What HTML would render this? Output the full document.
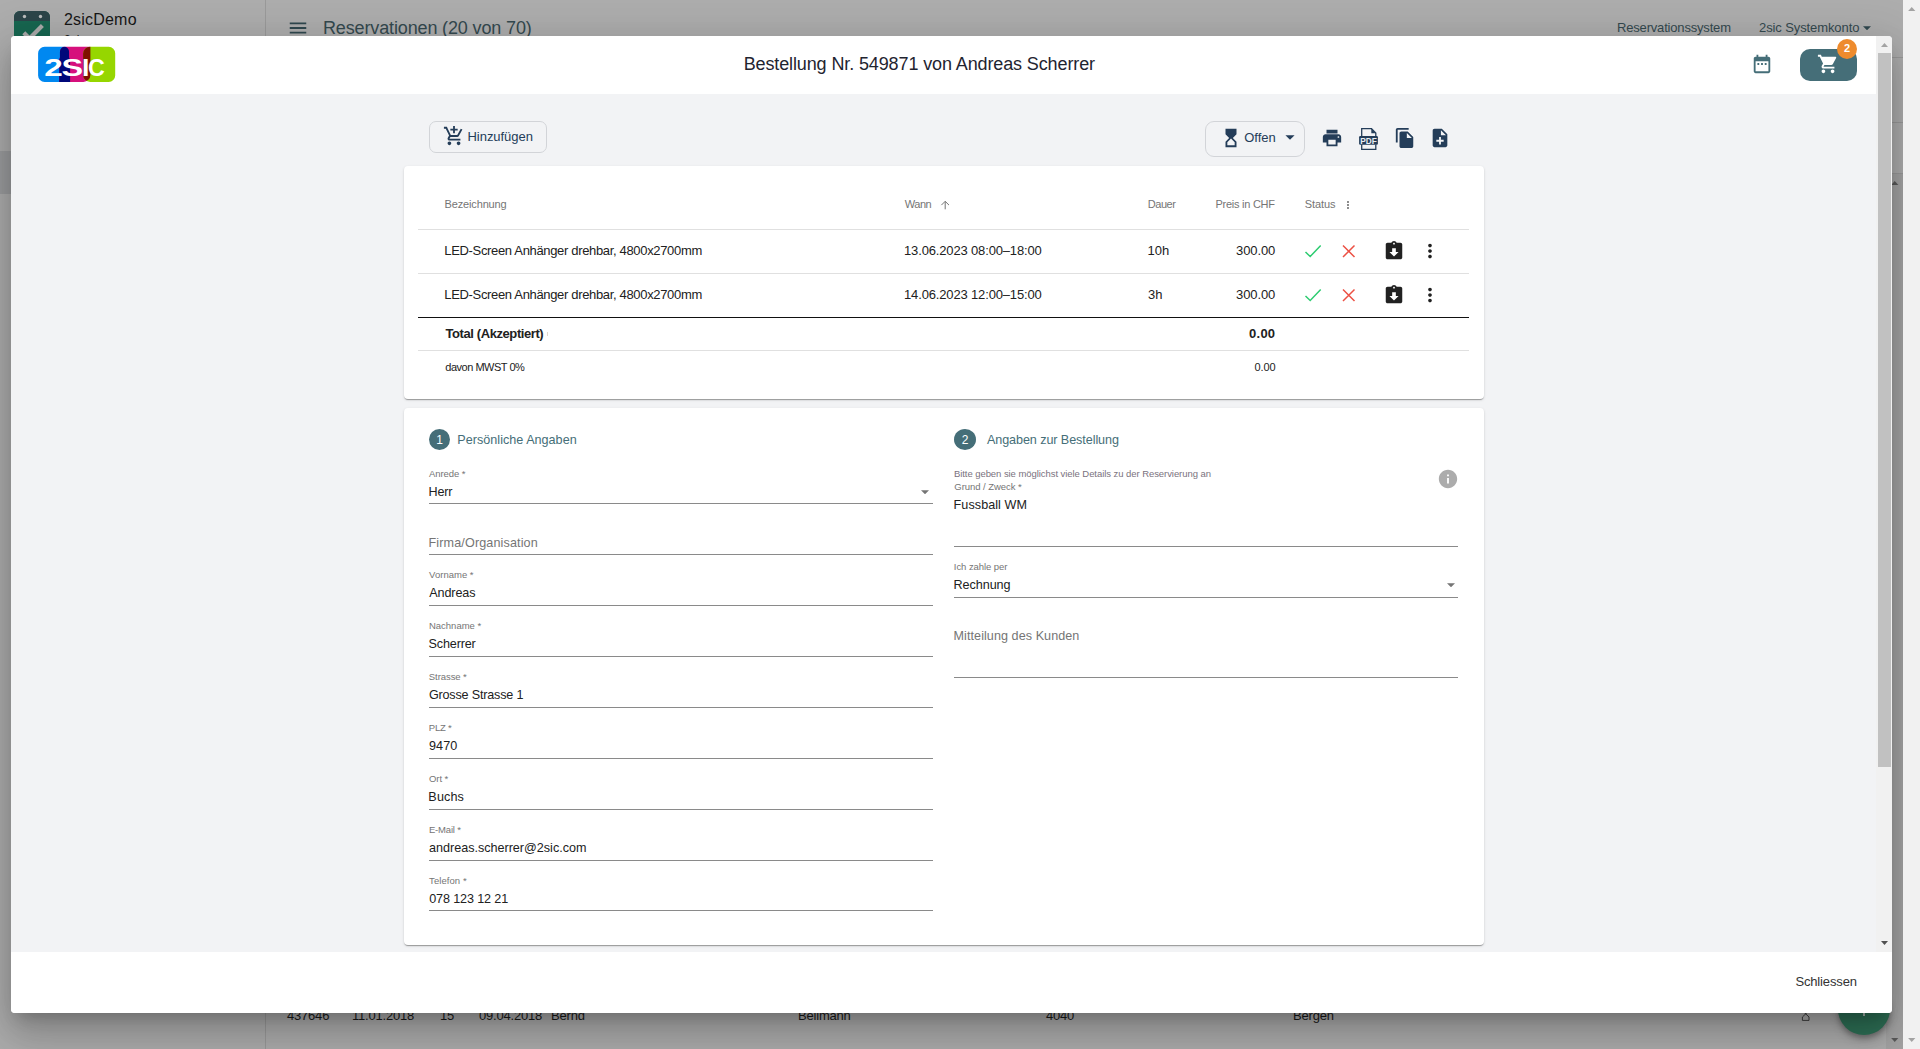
<!DOCTYPE html>
<html lang="de">
<head>
<meta charset="utf-8">
<title>Bestellung Nr. 549871 von Andreas Scherrer</title>
<style>
*{box-sizing:border-box;margin:0;padding:0}
html,body{width:1920px;height:1049px;overflow:hidden}
body{position:relative;background:#adadad;font-family:"Liberation Sans",Arial,sans-serif;color:#212121;font-size:13px}
.a{position:absolute}
.t{position:absolute;white-space:nowrap;line-height:1}
svg{display:block}
/* ---------- underlying (dimmed) page ---------- */
#bg{position:absolute;left:0;top:0;width:1920px;height:1049px;overflow:hidden}
/* ---------- dialog ---------- */
#dlg{position:absolute;left:11px;top:36px;width:1881px;height:977px;background:#f2f3f5;border-radius:4px;overflow:hidden}
#shadow{position:absolute;left:11px;top:36px;width:1881px;height:977px;border-radius:4px;box-shadow:0 11px 15px -7px rgba(0,0,0,.2),0 24px 38px 3px rgba(0,0,0,.14),0 9px 46px 8px rgba(0,0,0,.12)}
#hdr{position:absolute;left:0;top:0;width:1866px;height:58px;background:#fff}
#ftr{position:absolute;left:0;top:916px;width:1881px;height:61px;background:#fff}
.card{position:absolute;background:#fff;border-radius:4px;box-shadow:0 2px 1px -1px rgba(0,0,0,.2),0 1px 1px 0 rgba(0,0,0,.14),0 1px 3px 0 rgba(0,0,0,.12)}
.hl{position:absolute;height:1px;background:#e0e0e0}
.ul{position:absolute;height:1px;background:#8a8a8a;width:504px}
.lb{color:#757575;font-size:9.500px}
.val{font-size:12.600px;color:#212121}
.ph{font-size:12.600px;color:#757575}
.th{font-size:11px;color:#757575}
.td{font-size:13px;color:#212121}
.btn{position:absolute;border:1px solid #d2d4d8;border-radius:7px;background:#f2f3f5}
</style>
</head>
<body>
<div id="bg">
  <!-- sidebar -->
  <div class="a" style="left:0;top:0;width:265px;height:1049px;background:#adadad"></div>
  <div class="a" style="left:0;top:151px;width:265px;height:43px;background:#9b9c9e"></div>
  <div class="a" style="left:265px;top:0;width:1px;height:1049px;background:#9a9a9a"></div>
  <svg class="a" style="left:14px;top:11px" width="36" height="36" viewBox="0 0 36 36">
    <rect x="0" y="0" width="36" height="36" rx="6" fill="#176650"/>
    <path d="M0 6a6 6 0 0 1 6-6h24a6 6 0 0 1 6 6v4H0z" fill="#2b4549"/>
    <circle cx="10.5" cy="5.5" r="1.7" fill="#b9bcbc"/><circle cx="26.500" cy="5.500" r="1.700" fill="#b9bcbc"/>
    <path d="M9.800 21.800l5.700 5.700L28.400 14.600" fill="none" stroke="#aaa" stroke-width="4.200"/>
  </svg>
  <span class="t" style="left:64px;top:12px;font-size:16px;color:#161616;letter-spacing:.2px">2sicDemo</span>
  <span class="t" style="left:64px;top:33.900px;font-size:12px;color:#222">2sic</span>
  <!-- top bar -->
  <svg class="a" style="left:287.250px;top:16.700px" width="22" height="22" viewBox="0 0 24 24"><path fill="#30484f" d="M3 18h18v-2H3v2zm0-5h18v-2H3v2zm0-7v2h18V6H3z"/></svg>
  <span class="t" style="left:323px;top:19px;font-size:18px;color:#34494f;letter-spacing:-.14px">Reservationen (20 von 70)</span>
  <span class="t" style="left:1617px;top:21px;font-size:13px;color:#34494f;letter-spacing:-.18px">Reservationssystem</span>
  <span class="t" style="left:1759px;top:21px;font-size:13px;color:#34494f;letter-spacing:-.1px">2sic Systemkonto</span>
  <svg class="a" style="left:1863px;top:25.5px" width="8" height="4.500" viewBox="0 0 10 5"><path fill="#30484f" d="M0 0h10L5 5z"/></svg>
  <div class="a" style="left:266px;top:57px;width:1637px;height:1px;background:#9a9a9a"></div>
  <div class="a" style="left:266px;top:122px;width:1637px;height:1px;background:#9a9a9a"></div>
  <div class="a" style="left:266px;top:173px;width:1637px;height:1px;background:#9a9a9a"></div>
  <!-- inner scrollbar of the list -->
  <div class="a" style="left:1886px;top:174px;width:17px;height:875px;background:#a4a4a4"></div>
  <svg class="a" style="left:1891px;top:181px" width="7.500" height="4" viewBox="0 0 9 5"><path fill="#5a5a5a" d="M0 5h9L4.500 0z"/></svg>
  <svg class="a" style="left:1891px;top:1038px" width="7.500" height="4" viewBox="0 0 9 5"><path fill="#5a5a5a" d="M0 0h9L4.500 5z"/></svg>
  <!-- last visible table row -->
  <span class="t" style="left:287px;top:1009px;font-size:13px;color:#1a1a1a;letter-spacing:-.2px">437646</span>
  <span class="t" style="left:352px;top:1009px;font-size:13px;color:#1a1a1a;letter-spacing:-.2px">11.01.2018</span>
  <span class="t" style="left:440px;top:1009px;font-size:13px;color:#1a1a1a;letter-spacing:-.2px">15</span>
  <span class="t" style="left:479px;top:1009px;font-size:13px;color:#1a1a1a;letter-spacing:-.2px">09.04.2018</span>
  <span class="t" style="left:551px;top:1009px;font-size:13px;color:#1a1a1a;letter-spacing:-.2px">Bernd</span>
  <span class="t" style="left:798px;top:1009px;font-size:13px;color:#1a1a1a;letter-spacing:-.2px">Bellmann</span>
  <span class="t" style="left:1046px;top:1009px;font-size:13px;color:#1a1a1a;letter-spacing:-.2px">4040</span>
  <span class="t" style="left:1293px;top:1009px;font-size:13px;color:#1a1a1a;letter-spacing:-.2px">Bergen</span>
  <svg class="a" style="left:1799px;top:1008px" width="14" height="14" viewBox="0 0 14 14"><path fill="none" stroke="#333" stroke-width=".900" d="M4.600 3.800l5.400 5.200v3.400H3.400V9l5.400-5.200"/></svg>
  <!-- FAB -->
  <div class="a" style="left:1837.5px;top:983px;width:52px;height:52px;border-radius:50%;background:#2e7056;box-shadow:0 3px 5px rgba(0,0,0,.25),0 6px 10px rgba(0,0,0,.15)"></div>
  <div class="a" style="left:1862.5px;top:1002px;width:2px;height:14px;background:#a9b4af"></div>
  <div class="a" style="left:1856.5px;top:1008px;width:14px;height:2px;background:#a9b4af"></div>
</div>
<div id="shadow"></div>
<div id="dlg">
<div id="in" class="a" style="left:-11px;top:-36px;width:1920px;height:1049px">
  <!-- header -->
  <div class="a" style="left:11px;top:36px;width:1865px;height:58px;background:#fff"></div>
  <svg class="a" style="left:36px;top:44px" width="82" height="41" viewBox="36 44 82 41">
    <defs><clipPath id="cb"><path d="M44.600 46.800H64.300A4.760 4.760 0 0 1 69.060 51.560V57C69.060 58.600 70.100 58.600 70.100 60.200V81.900H44.600A6.500 6.500 0 0 1 38.100 75.400V53.300A6.500 6.500 0 0 1 44.600 46.800Z"/></clipPath><clipPath id="cg"><path d="M90.1 46.8H108.7A6.5 6.5 0 0 1 115.2 53.3V75.4A6.5 6.5 0 0 1 108.7 81.9H90.1A7 7 0 0 1 83.1 74.9V53.8A7 7 0 0 1 90.1 46.8Z"/></clipPath></defs>
    <path d="M44.600 46.800H64.300A4.760 4.760 0 0 1 69.060 51.560V57C69.060 58.600 70.100 58.600 70.100 60.200V81.900H44.600A6.500 6.500 0 0 1 38.100 75.400V53.300A6.500 6.500 0 0 1 44.600 46.800Z" fill="#0088f0"/>
    <path d="M64.700 46.800H90.400V74.900A7 7 0 0 1 83.400 81.900H59.200V60.200C59.200 58.600 59.950 58.600 59.950 57V51.550A4.750 4.750 0 0 1 64.700 46.800Z" fill="#d6107c"/>
    <path d="M90.1 46.8H108.7A6.5 6.5 0 0 1 115.2 53.3V75.4A6.5 6.5 0 0 1 108.7 81.9H90.1A7 7 0 0 1 83.1 74.9V53.8A7 7 0 0 1 90.1 46.8Z" fill="#96d600"/>
    <path d="M64.700 46.800H90.400V74.900A7 7 0 0 1 83.400 81.900H59.200V60.200C59.200 58.600 59.950 58.600 59.950 57V51.550A4.750 4.750 0 0 1 64.700 46.800Z" fill="#00087a" clip-path="url(#cb)"/>
    <path d="M64.700 46.800H90.400V74.900A7 7 0 0 1 83.400 81.900H59.200V60.200C59.200 58.600 59.950 58.600 59.950 57V51.550A4.750 4.750 0 0 1 64.700 46.800Z" fill="#7f1000" clip-path="url(#cg)"/>
    <g font-family="Liberation Sans, Arial, sans-serif" font-weight="bold" font-size="23.700" fill="#fff"><text x="44.300" y="76" textLength="18.600" lengthAdjust="spacingAndGlyphs">2</text><text x="61.600" y="76" textLength="21.600" lengthAdjust="spacingAndGlyphs">S</text><text x="81.900" y="76" textLength="7.400" lengthAdjust="spacingAndGlyphs">I</text><text x="88" y="76" textLength="16.800" lengthAdjust="spacingAndGlyphs">C</text></g>
  </svg>
  <span class="t" id="title" style="left:743.64px;top:55.00px;font-size:18px;color:#1f2430;letter-spacing:-0.117px">Bestellung Nr. 549871 von Andreas Scherrer</span>
  <svg class="a" style="left:1751px;top:53px" width="22" height="22" viewBox="0 0 24 24"><path fill="#456e78" d="M9 11H7v2h2v-2zm4 0h-2v2h2v-2zm4 0h-2v2h2v-2zm2-7h-1V2h-2v2H8V2H6v2H5c-1.110 0-1.990.900-1.990 2L3 20c0 1.100.890 2 2 2h14c1.100 0 2-.900 2-2V6c0-1.100-.900-2-2-2zm0 16H5V9h14v11z"/></svg>
  <div class="a" style="left:1800px;top:49px;width:57px;height:32px;border-radius:10px;background:#456e78"></div>
  <svg class="a" style="left:1817px;top:53px" width="22" height="22" viewBox="0 0 24 24"><path fill="#fff" d="M7 18c-1.100 0-1.990.900-1.990 2S5.900 22 7 22s2-.900 2-2-.900-2-2-2zM1 2v2h2l3.600 7.590-1.350 2.450c-.160.280-.250.610-.250.960 0 1.100.900 2 2 2h12v-2H7.420c-.140 0-.250-.110-.250-.250l.030-.120.900-1.630h7.450c.750 0 1.410-.410 1.750-1.030l3.580-6.490c.080-.140.120-.310.120-.480 0-.550-.450-1-1-1H5.210l-.940-2H1zm16 16c-1.100 0-1.990.900-1.990 2s.890 2 1.990 2 2-.900 2-2-.900-2-2-2z"/></svg>
  <div class="a" style="left:1837px;top:39px;width:20px;height:20px;border-radius:50%;background:#ee8b2d"></div>
  <span class="t" style="left:1837px;top:43px;width:20px;text-align:center;font-size:11px;font-weight:bold;color:#fff">2</span>
  <!--BODY-->
  <!-- toolbar -->
  <div class="btn" style="left:429px;top:121px;width:118px;height:32px"></div>
  <svg class="a" style="left:443px;top:125px" width="22" height="22" viewBox="0 0 24 24"><path fill="#243d59" d="M11 9h2V6h3V4h-3V1h-2v3H8v2h3v3zm-4 9c-1.100 0-1.990.900-1.990 2S5.900 22 7 22s2-.900 2-2-.900-2-2-2zm10 0c-1.100 0-1.990.900-1.990 2s.890 2 1.990 2 2-.900 2-2-.900-2-2-2zm-9.830-3.250l.030-.120.900-1.630h7.450c.750 0 1.410-.410 1.750-1.030l3.860-7.010L19.420 4h-.010l-1.100 2-2.760 5H8.530l-.130-.270L6.160 6l-.950-2-.940-2H1v2h2l3.600 7.590-1.350 2.450c-.160.280-.250.610-.250.960 0 1.100.900 2 2 2h12v-2H7.420c-.130 0-.250-.110-.250-.250z"/></svg>
  <span class="t" id="t_add" style="left:467.52px;top:130px;font-size:13px;color:#243d59;letter-spacing:-0.045px">Hinzufügen</span>
  <div class="btn" style="left:1205px;top:121px;width:100px;height:36px;border-radius:9px"></div>
  <svg class="a" style="left:1219.5px;top:127px" width="22" height="22" viewBox="0 0 24 24"><path fill="#243d59" d="M6 2l.010 6L10 12l-3.990 4.010L6 22h12v-6l-4-4 4-3.990V2H6zm10 14.500V20H8v-3.500l4-4 4 4z"/></svg>
  <span class="t" id="t_offen" style="left:1244.13px;top:131px;font-size:13px;color:#243d59;letter-spacing:0.012px">Offen</span>
  <svg class="a" style="left:1278.600px;top:126px" width="22" height="22" viewBox="0 0 24 24"><path fill="#243d59" d="M7 10l5 5 5-5z"/></svg>
  <svg class="a" style="left:1321.100px;top:127px" width="22" height="22" viewBox="0 0 24 24"><path fill="#243d59" d="M19 8H5c-1.660 0-3 1.340-3 3v6h4v4h12v-4h4v-6c0-1.660-1.340-3-3-3zm-3 11H8v-5h8v5zm3-7c-.550 0-1-.450-1-1s.450-1 1-1 1 .450 1 1-.450 1-1 1zm-1-9H6v4h12V3z"/></svg>
  <svg class="a" style="left:1357px;top:127px" width="24" height="24" viewBox="0 0 24 24">
    <path fill="none" stroke="#243d59" stroke-width="1.300" d="M4.700 9.500V1.700h9.800l4.300 4.300v3.500M4.700 17.500v4.800h14.100v-4.800"/>
    <path fill="#243d59" d="M14.300 1.700l4.500 4.500h-4.500z"/>
    <rect x="2.100" y="9.100" width="18.800" height="8.600" rx="1.200" fill="#243d59"/>
    <text x="11.500" y="16.700" text-anchor="middle" font-family="Liberation Sans, Arial, sans-serif" font-weight="bold" font-size="9" fill="#e9edf2" textLength="16.500" lengthAdjust="spacingAndGlyphs">PDF</text>
  </svg>
  <svg class="a" style="left:1393.900px;top:127px" width="22" height="22" viewBox="0 0 24 24"><path fill="#243d59" d="M16 1H4c-1.100 0-2 .900-2 2v14h2V3h12V1zm-1 4l6 6v10c0 1.100-.900 2-2 2H7.990C6.890 23 6 22.100 6 21l.010-14c0-1.100.890-2 1.990-2h7zm-1 7h5.500L14 6.500V12z"/></svg>
  <svg class="a" style="left:1429.100px;top:127px" width="22" height="22" viewBox="0 0 24 24"><path fill="#243d59" d="M14 2H6c-1.100 0-1.990.900-1.990 2L4 20c0 1.100.890 2 1.990 2H18c1.100 0 2-.900 2-2V8l-6-6zm2 14h-3v3h-2v-3H8v-2h3v-3h2v3h3v2zm-3-7V3.500L18.500 9H13z"/></svg>
  <!-- table card -->
  <div class="card" style="left:404px;top:166px;width:1080px;height:233px"></div>
  <span class="t th" id="h1" style="left:444.46px;top:199px;letter-spacing:-0.137px">Bezeichnung</span>
  <span class="t th" id="h2" style="left:904.85px;top:199px;letter-spacing:-0.486px">Wann</span>
  <svg class="a" style="left:939px;top:198.500px" width="12" height="12" viewBox="0 0 12 12"><path fill="none" stroke="#757575" stroke-width="1" d="M6.200 10.300V2.400M2.400 6.100l3.800-3.800 3.800 3.800"/></svg>
  <span class="t th" id="h3" style="left:1147.81px;top:199px;letter-spacing:-0.459px">Dauer</span>
  <span class="t th" id="h4" style="left:1215.46px;top:199px;letter-spacing:-0.252px">Preis in CHF</span>
  <span class="t th" id="h5" style="left:1304.64px;top:199px;letter-spacing:-0.067px">Status</span>
  <svg class="a" style="left:1341.500px;top:198.500px" width="12" height="12" viewBox="0 0 24 24"><path fill="#757575" d="M12 8c1.100 0 2-.900 2-2s-.900-2-2-2-2 .900-2 2 .900 2 2 2zm0 2c-1.100 0-2 .900-2 2s.900 2 2 2 2-.900 2-2-.900-2-2-2zm0 6c-1.100 0-2 .900-2 2s.900 2 2 2 2-.900 2-2-.900-2-2-2z"/></svg>
  <div class="hl" style="left:418px;top:229px;width:1051px"></div>
  <span class="t td" id="r1a" style="left:444.32px;top:244px;letter-spacing:-0.336px">LED-Screen Anhänger drehbar, 4800x2700mm</span>
  <span class="t td" id="r1b" style="left:904.05px;top:244px;letter-spacing:-0.154px">13.06.2023 08:00–18:00</span>
  <span class="t td" id="r1c" style="left:1147.60px;top:244px;letter-spacing:0.034px">10h</span>
  <span class="t td" id="r1d" style="left:1175.27px;width:100px;text-align:right;top:244px;letter-spacing:-0.088px">300.00</span>
  <svg class="a" style="left:1302px;top:240px" width="22" height="22" viewBox="0 0 22 22"><path fill="none" stroke="#2ecc71" stroke-width="1.500" d="M3.500 12l4.700 4.500L18.700 5.500"/></svg>
  <svg class="a" style="left:1338px;top:240px" width="22" height="22" viewBox="0 0 22 22"><path fill="none" stroke="#ec5145" stroke-width="1.500" d="M5 5.500l11.500 11.500M16.500 5.500L5 17"/></svg>
  <svg class="a" style="left:1382.750px;top:240.2px" width="22" height="22" viewBox="0 0 24 24"><path fill="#212121" d="M19 3h-4.180C14.400 1.840 13.300 1 12 1c-1.300 0-2.400.840-2.820 2H5c-1.100 0-2 .900-2 2v14c0 1.100.900 2 2 2h14c1.100 0 2-.900 2-2V5c0-1.100-.900-2-2-2zm-7 0c.550 0 1 .450 1 1s-.450 1-1 1-1-.450-1-1 .450-1 1-1zm0 15l-5-5h3V9h4v4h3l-5 5z"/></svg>
  <svg class="a" style="left:1418.900px;top:240.1px" width="22" height="22" viewBox="0 0 24 24"><path fill="#212121" d="M12 8c1.100 0 2-.900 2-2s-.900-2-2-2-2 .900-2 2 .900 2 2 2zm0 2c-1.100 0-2 .900-2 2s.900 2 2 2 2-.900 2-2-.900-2-2-2zm0 6c-1.100 0-2 .900-2 2s.900 2 2 2 2-.900 2-2-.900-2-2-2z"/></svg>
  <div class="hl" style="left:418px;top:273px;width:1051px"></div>
  <span class="t td" id="r2a" style="left:444.32px;top:288px;letter-spacing:-0.336px">LED-Screen Anhänger drehbar, 4800x2700mm</span>
  <span class="t td" id="r2b" style="left:904.05px;top:288px;letter-spacing:-0.154px">14.06.2023 12:00–15:00</span>
  <span class="t td" id="r2c" style="left:1148.04px;top:288px;letter-spacing:-0.057px">3h</span>
  <span class="t td" id="r2d" style="left:1175.27px;width:100px;text-align:right;top:288px;letter-spacing:-0.088px">300.00</span>
  <svg class="a" style="left:1302px;top:284px" width="22" height="22" viewBox="0 0 22 22"><path fill="none" stroke="#2ecc71" stroke-width="1.500" d="M3.500 12l4.700 4.500L18.700 5.500"/></svg>
  <svg class="a" style="left:1338px;top:284px" width="22" height="22" viewBox="0 0 22 22"><path fill="none" stroke="#ec5145" stroke-width="1.500" d="M5 5.500l11.500 11.500M16.500 5.500L5 17"/></svg>
  <svg class="a" style="left:1382.750px;top:284.2px" width="22" height="22" viewBox="0 0 24 24"><path fill="#212121" d="M19 3h-4.180C14.400 1.840 13.300 1 12 1c-1.300 0-2.400.840-2.820 2H5c-1.100 0-2 .900-2 2v14c0 1.100.900 2 2 2h14c1.100 0 2-.900 2-2V5c0-1.100-.900-2-2-2zm-7 0c.550 0 1 .450 1 1s-.450 1-1 1-1-.450-1-1 .450-1 1-1zm0 15l-5-5h3V9h4v4h3l-5 5z"/></svg>
  <svg class="a" style="left:1418.900px;top:284.1px" width="22" height="22" viewBox="0 0 24 24"><path fill="#212121" d="M12 8c1.100 0 2-.900 2-2s-.900-2-2-2-2 .900-2 2 .900 2 2 2zm0 2c-1.100 0-2 .900-2 2s.900 2 2 2 2-.900 2-2-.900-2-2-2zm0 6c-1.100 0-2 .900-2 2s.900 2 2 2 2-.900 2-2-.900-2-2-2z"/></svg>
  <div class="hl" style="left:418px;top:317px;width:1051px;background:#111"></div>
  <span class="t td" id="tot" style="left:445.52px;top:327px;font-weight:bold;letter-spacing:-0.413px">Total (Akzeptiert)</span>
  <div class="a" style="left:547px;top:331.500px;width:1px;height:4.500px;background:#e3d8cc"></div>
  <span class="t td" id="totv" style="left:1175.31px;width:100px;text-align:right;top:327px;font-weight:bold;letter-spacing:0.222px">0.00</span>
  <div class="hl" style="left:418px;top:350px;width:1051px"></div>
  <span class="t" id="mw" style="left:445.28px;top:361.600px;font-size:11px;color:#212121;letter-spacing:-0.482px">davon MWST 0%</span>
  <span class="t" id="mwv" style="left:1175.43px;width:100px;text-align:right;top:361.600px;font-size:11px;color:#212121;letter-spacing:-0.135px">0.00</span>
  <!--FORM-->
  <div class="card" style="left:404px;top:408px;width:1080px;height:537px"></div>
  <div class="a" style="left:429px;top:429px;width:21px;height:21px;border-radius:50%;background:#456e78"></div>
  <span class="t" id="n1" style="left:429px;width:21px;text-align:center;top:434px;font-size:12px;color:#fff">1</span>
  <span class="t" id="s1" style="left:457.33px;top:433.500px;font-size:12.600px;color:#456e78;letter-spacing:0.017px">Persönliche Angaben</span>
  <div class="a" style="left:954px;top:429px;width:22px;height:21px;border-radius:50%;background:#456e78"></div>
  <span class="t" id="n2" style="left:954px;width:22px;text-align:center;top:434px;font-size:12px;color:#fff">2</span>
  <span class="t" id="s2" style="left:986.92px;top:433.500px;font-size:12.600px;color:#456e78;letter-spacing:-0.080px">Angaben zur Bestellung</span>
  <span class="t lb" id="l0" style="left:428.89px;top:468.7px;letter-spacing:-0.045px">Anrede *</span>
  <span class="t val" id="v0" style="left:428.55px;top:486.10px;letter-spacing:-0.180px">Herr</span>
  <div class="ul" style="left:429px;top:503px"></div>
  <span class="t ph" id="v1" style="left:428.55px;top:537.10px;letter-spacing:0.125px">Firma/Organisation</span>
  <div class="ul" style="left:429px;top:554px"></div>
  <span class="t lb" id="l2" style="left:429.10px;top:569.70px;letter-spacing:0.014px">Vorname *</span>
  <span class="t val" id="v2" style="left:429.16px;top:587.10px;letter-spacing:-0.091px">Andreas</span>
  <div class="ul" style="left:429px;top:605px"></div>
  <span class="t lb" id="l3" style="left:428.90px;top:620.70px;letter-spacing:0.005px">Nachname *</span>
  <span class="t val" id="v3" style="left:428.62px;top:638.10px;letter-spacing:-0.160px">Scherrer</span>
  <div class="ul" style="left:429px;top:656px"></div>
  <span class="t lb" id="l4" style="left:428.83px;top:671.70px;letter-spacing:-0.069px">Strasse *</span>
  <span class="t val" id="v4" style="left:428.93px;top:689.10px;letter-spacing:-0.186px">Grosse Strasse 1</span>
  <div class="ul" style="left:429px;top:707px"></div>
  <span class="t lb" id="l5" style="left:428.87px;top:722.70px;letter-spacing:-0.250px">PLZ *</span>
  <span class="t val" id="v5" style="left:428.93px;top:740.10px;letter-spacing:0.137px">9470</span>
  <div class="ul" style="left:429px;top:758px"></div>
  <span class="t lb" id="l6" style="left:429.02px;top:773.70px;letter-spacing:-0.083px">Ort *</span>
  <span class="t val" id="v6" style="left:428.37px;top:791.10px;letter-spacing:0.131px">Buchs</span>
  <div class="ul" style="left:429px;top:809px"></div>
  <span class="t lb" id="l7" style="left:428.90px;top:824.70px;letter-spacing:-0.165px">E-Mail *</span>
  <span class="t val" id="v7" style="left:429.03px;top:842.10px;letter-spacing:-0.011px">andreas.scherrer@2sic.com</span>
  <div class="ul" style="left:429px;top:860px"></div>
  <span class="t lb" id="l8" style="left:429.07px;top:875.70px;letter-spacing:0.072px">Telefon *</span>
  <span class="t val" id="v8" style="left:429.13px;top:893.10px;letter-spacing:-0.117px">078 123 12 21</span>
  <div class="ul" style="left:429px;top:910px"></div>
  <svg class="a" style="left:921px;top:489.500px" width="8" height="4.500" viewBox="0 0 10 5"><path fill="#757575" d="M0 0h10L5 5z"/></svg>
  <span class="t lb" id="rl0" style="left:953.94px;top:469px;color:#7a727e;letter-spacing:-0.063px">Bitte geben sie möglichst viele Details zu der Reservierung an</span>
  <span class="t lb" id="rl1" style="left:954.30px;top:481.800px;letter-spacing:-0.044px">Grund / Zweck *</span>
  <span class="t val" id="rv1" style="left:953.62px;top:499.10px;letter-spacing:0.058px">Fussball WM</span>
  <div class="ul" style="left:954px;top:546px"></div>
  <svg class="a" style="left:1437px;top:468px" width="22" height="22" viewBox="0 0 24 24"><path fill="#acacac" d="M12 2C6.480 2 2 6.480 2 12s4.480 10 10 10 10-4.480 10-10S17.520 2 12 2zm1 15h-2v-6h2v6zm0-8h-2V7h2v2z"/></svg>
  <span class="t lb" id="rl2" style="left:953.85px;top:561.600px;letter-spacing:-0.064px">Ich zahle per</span>
  <span class="t val" id="rv2" style="left:953.57px;top:579.40px;letter-spacing:-0.061px">Rechnung</span>
  <div class="ul" style="left:954px;top:597px"></div>
  <svg class="a" style="left:1447px;top:582.500px" width="8" height="4.500" viewBox="0 0 10 5"><path fill="#757575" d="M0 0h10L5 5z"/></svg>
  <span class="t ph" id="rv3" style="left:953.57px;top:630.40px;letter-spacing:0.059px">Mitteilung des Kunden</span>
  <div class="ul" style="left:954px;top:677px"></div>
  <!-- dialog scrollbar -->
  <div class="a" style="left:1876px;top:36px;width:16px;height:916px;background:#f1f1f1"></div>
  <div class="a" style="left:1878px;top:53px;width:13px;height:714px;background:#c1c1c1"></div>
  <svg class="a" style="left:1881px;top:43px" width="7" height="4" viewBox="0 0 9 5"><path fill="#a3a3a3" d="M0 5h9L4.500 0z"/></svg>
  <svg class="a" style="left:1881px;top:941px" width="7" height="4" viewBox="0 0 9 5"><path fill="#505050" d="M0 0h9L4.500 5z"/></svg>
  <!-- footer -->
  <div class="a" style="left:11px;top:952px;width:1881px;height:61px;background:#fff"></div>
  <span class="t" id="close" style="left:1795.38px;top:975px;font-size:13px;color:#333;letter-spacing:-0.136px">Schliessen</span>
</div>
</div>
<!-- page scrollbar -->
  <div class="a" style="left:1903px;top:0;width:17px;height:1049px;background:#f1f1f1"></div>
  <svg class="a" style="left:1908px;top:6.700px" width="7.500" height="4" viewBox="0 0 9 5"><path fill="#a3a3a3" d="M0 5h9L4.500 0z"/></svg>
  <svg class="a" style="left:1908px;top:1038px" width="7.500" height="4" viewBox="0 0 9 5"><path fill="#a3a3a3" d="M0 0h9L4.500 5z"/></svg>
</body>
</html>
